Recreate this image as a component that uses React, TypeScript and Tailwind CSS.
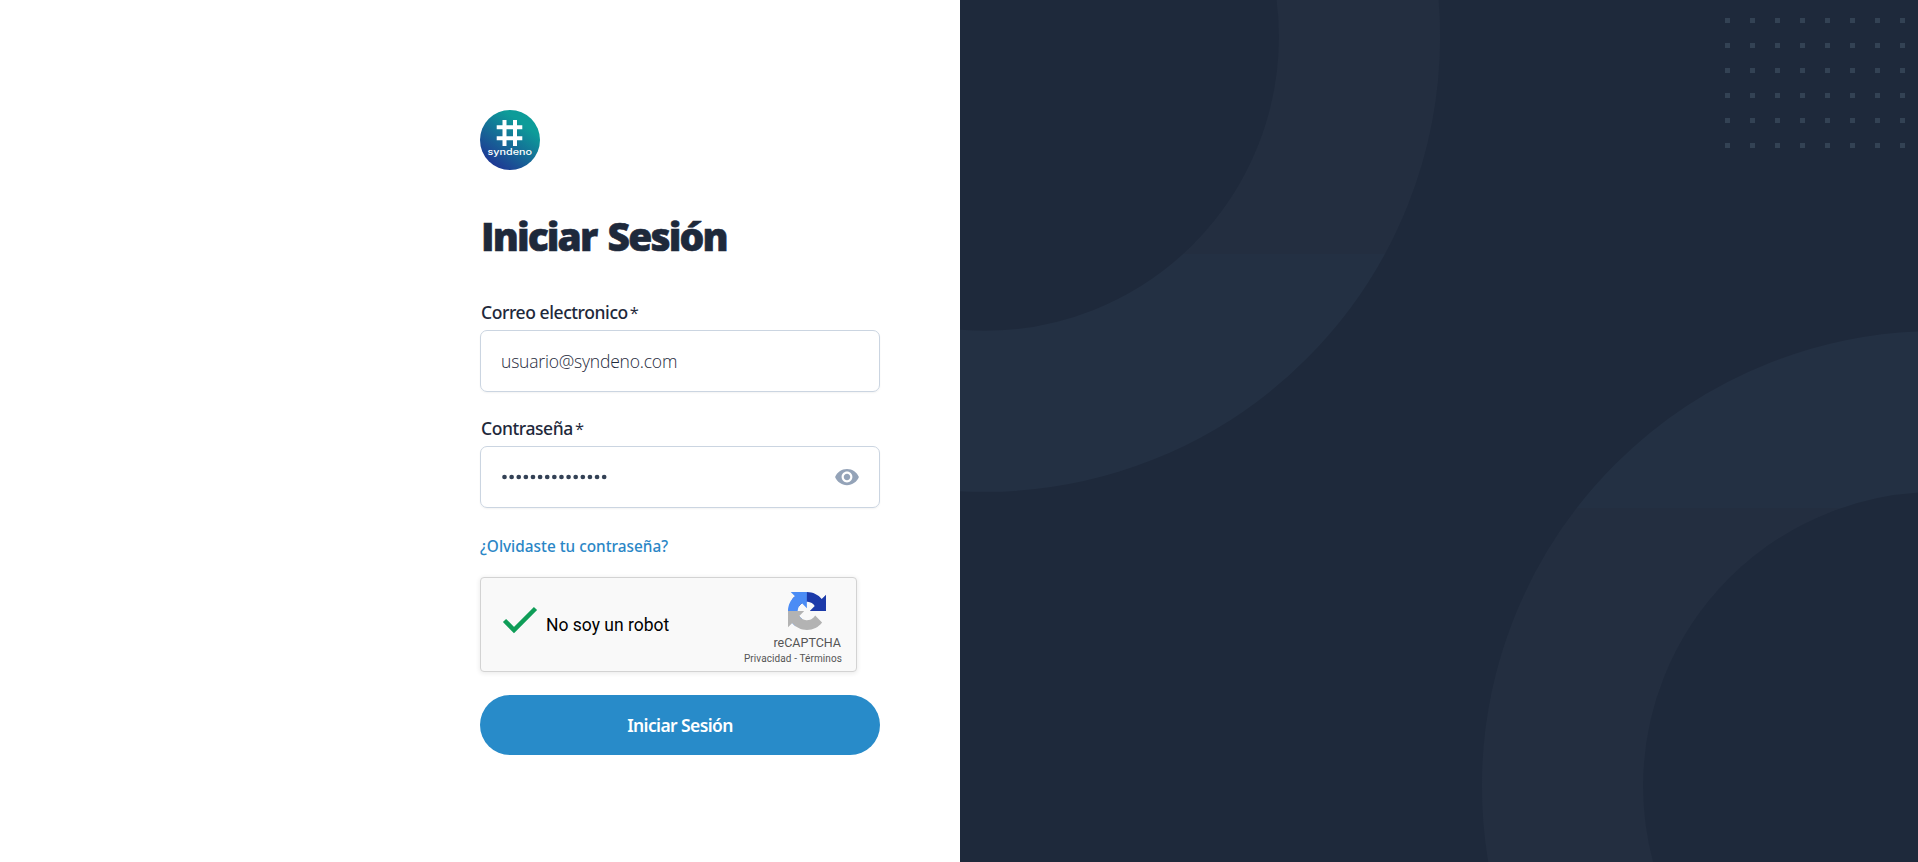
import { MdVisibility } from "react-icons/md";

function Logo() {
  return (
    <svg width="60" height="60" viewBox="0 0 60 60" className="block">
      <defs>
        <linearGradient id="logo" x1="0.22" y1="0.9" x2="0.7" y2="0.22">
          <stop offset="0" stopColor="#1e3a94" />
          <stop offset="1" stopColor="#0d9c99" />
        </linearGradient>
      </defs>
      <circle cx="30" cy="30" r="30" fill="url(#logo)" />
      <path d="M24.5 10v26M35 10v26M16.7 17.2h25.6M16.7 28.2h25.6" stroke="#fff" strokeWidth="4" fill="none" />
      <text x="7.5" y="45" fill="#fff" fontSize="8.6" textLength="44.5" lengthAdjust="spacingAndGlyphs" className="font-['Inter',sans-serif] font-medium">
        syndeno
      </text>
    </svg>
  );
}

function RecaptchaMark() {
  return (
    <svg width="38" height="38" viewBox="0 0 64 64" className="block">
      <path d="M64 31.955c0-.46-.011-.918-.032-1.374V4.687l-7.159 7.16C50.949 4.674 42.034.093 32.048.093c-10.393 0-19.625 4.96-25.46 12.64l11.735 11.858a15.55 15.55 0 0 1 4.754-5.334c2.051-1.6 4.956-2.909 8.971-2.909.485 0 .859.057 1.134.163 4.975.393 9.288 3.139 11.826 7.124l-8.307 8.307c10.522-.041 22.408-.066 27.299.013" fill="#1c3aa9" />
      <path d="M31.862.094c-.46 0-.917.012-1.373.032H4.594l7.159 7.159C4.58 13.145 0 22.06 0 32.046c0 10.393 4.96 19.625 12.64 25.46l11.858-11.735a15.55 15.55 0 0 1-5.334-4.754c-1.6-2.051-2.909-4.956-2.909-8.971 0-.485.057-.859.163-1.134.393-4.975 3.139-9.288 7.124-11.826l8.307 8.307c-.041-10.522-.066-22.408.013-27.299" fill="#4b8cf5" />
      <path d="M.001 32.045c0 .46.012.918.032 1.374v25.895l7.159-7.159C13.053 59.328 21.968 63.908 31.954 63.908c10.393 0 19.624-4.96 25.459-12.64L45.679 39.41a15.55 15.55 0 0 1-4.755 5.334c-2.05 1.6-4.956 2.909-8.971 2.909-.485 0-.859-.057-1.134-.163-4.975-.393-9.288-3.139-11.825-7.124l8.307-8.307c-10.522.041-22.408.066-27.299-.013" fill="#b3b3b3" />
    </svg>
  );
}

function Backdrop() {
  return (
    <svg width="960" height="864" viewBox="0 0 960 864" className="block shrink-0" fill="none">
      <defs>
        <linearGradient id="ring" gradientUnits="userSpaceOnUse" x1="0" y1="0" x2="0" y2="864">
          <stop offset="0.2935" stopColor="#232e40" />
          <stop offset="0.2935" stopColor="#233043" />
          <stop offset="0.588" stopColor="#233043" />
          <stop offset="0.588" stopColor="#232e40" />
        </linearGradient>
        <pattern id="dots" patternUnits="userSpaceOnUse" x="765" y="18" width="25" height="25">
          <rect width="5" height="5" fill="#334254" />
        </pattern>
      </defs>
      <circle cx="25" cy="36.8" r="374.5" stroke="url(#ring)" strokeWidth="161" />
      <circle cx="977" cy="786" r="374.5" stroke="url(#ring)" strokeWidth="161" />
      <rect x="765" y="18" width="195" height="141" fill="url(#dots)" />
    </svg>
  );
}

function PasswordDots() {
  return (
    <svg width="105" height="6" viewBox="0 0 105 6" className="block" fill="#334155">
      {Array.from({ length: 15 }, (_, i) => (
        <circle key={i} cx={2.5 + i * 7.12} cy="3" r="2.35" />
      ))}
    </svg>
  );
}

function FieldLabel({ text, htmlFor }: { text: string; htmlFor: string }) {
  return (
    <label className="flex h-[30px] gap-[2px] pl-px text-[17.5px] leading-[25px] font-medium whitespace-nowrap" htmlFor={htmlFor}>
      <span className="font-['Noto_Sans',sans-serif] tracking-[-0.42px]">{text}</span>
      <span className="text-[16.5px] font-normal">*</span>
    </label>
  );
}

export default function App() {
  return (
    <div className="flex h-[862px] w-full overflow-hidden bg-white font-['Open_Sans',sans-serif] text-[#1e293b]">
      <main className="flex w-[960px] shrink-0 justify-end pt-[110px] pr-20">
        <form className="w-[400px]">
          <Logo />
          <h1 className="mt-[38px] h-[57px] pl-px text-[39px] leading-[55px] font-extrabold tracking-[-1.9px] whitespace-nowrap [-webkit-text-stroke:0.6px_#1e293b] [word-spacing:3px]">Iniciar Sesión</h1>
          <div className="pt-[35px]">
            <FieldLabel text="Correo electronico" htmlFor="email" />
          </div>
          <div className="flex h-[62px] items-center rounded-[7px] border border-[#cbd5e1] px-5 pt-px shadow-xs">
            <input id="email" defaultValue="usuario@syndeno.com" className="w-full bg-transparent text-[17.5px] font-light tracking-[-0.2px] text-[#1e293b] outline-none" />
          </div>
          <div className="pt-6">
            <FieldLabel text="Contraseña" htmlFor="password" />
          </div>
          <div className="flex h-[62px] items-center justify-between rounded-[7px] border border-[#cbd5e1] pr-[19px] pl-[21px] shadow-xs">
            <PasswordDots />
            <MdVisibility className="size-[26px] text-[#94a3b8]" />
          </div>
          <a className="mt-[26px] block h-[25px] font-['Noto_Sans',sans-serif] text-[15.35px] leading-[25px] font-medium whitespace-nowrap text-[#2a86c6]">¿Olvidaste tu contraseña?</a>
          <div className="mt-[18px] flex h-[95px] w-[377px] items-center rounded-[4px] border border-[#d3d3d3] bg-[#f9f9f9] font-['Roboto',sans-serif] shadow-[0_1px_4px_1px_rgba(0,0,0,0.07)]">
            <svg width="36" height="28" viewBox="0 0 36 28" className="mb-[10px] ml-[21px]" fill="none">
              <path d="M2.5 14.5 12 24 33.5 2.5" stroke="#0f9d58" strokeWidth="4.5" />
            </svg>
            <span className="ml-2 pt-[2px] text-[17.5px] whitespace-nowrap text-black">No soy un robot</span>
            <div className="ml-auto flex flex-col items-end pt-[9px] pr-[14px] text-[#555]">
              <div className="mr-px flex flex-col items-center">
                <RecaptchaMark />
                <span className="mt-[4px] text-[12.5px] leading-[17px]">reCAPTCHA</span>
              </div>
              <span className="text-[10px] leading-[15px] tracking-[0.1px] whitespace-nowrap">Privacidad - Términos</span>
            </div>
          </div>
          <button type="button" className="mt-[23px] h-[60px] w-full rounded-full bg-[#288bc9] pt-px font-['Noto_Sans',sans-serif] text-[17.5px] font-semibold tracking-[-0.6px] text-white">Iniciar Sesión</button>
        </form>
      </main>
      <aside className="h-full min-w-0 grow overflow-hidden bg-[#1e293b]">
        <Backdrop />
      </aside>
    </div>
  );
}
